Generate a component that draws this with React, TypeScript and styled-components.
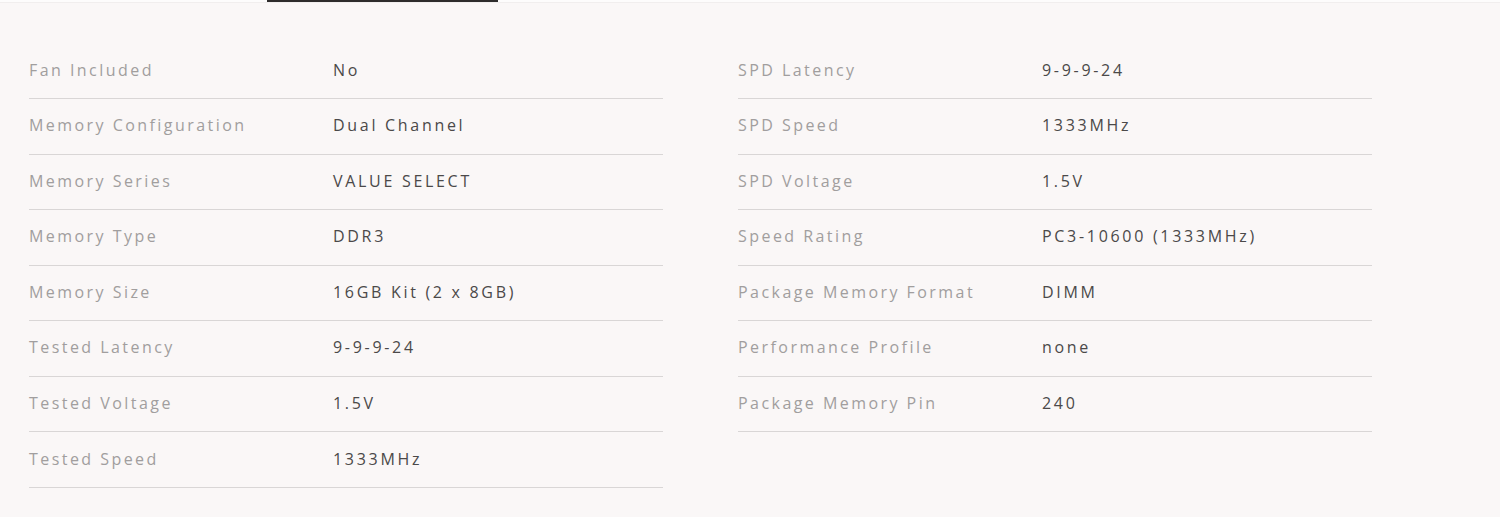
import React from "react";
import styled, { createGlobalStyle } from "styled-components";

const Global = createGlobalStyle`
  html, body { margin: 0; padding: 0; background: #faf7f7; }
  body { font-family: "Open Sans", Lato, sans-serif; }
`;

const Page = styled.div`
  width: 1500px;
  height: 517px;
  background: #faf7f7;
  overflow: hidden;
`;

const TabStrip = styled.div`
  height: 2px;
  background: #fdfcfc;
  border-bottom: 1px solid #f1eeee;
  padding-left: 267px;
`;

const TabIndicator = styled.div`
  width: 231px;
  height: 2px;
  background: #2e2c2c;
`;

const Specs = styled.div`
  display: grid;
  grid-template-columns: 634px 634px;
  column-gap: 75px;
  padding: 40.4px 0 0 29px;
  align-items: start;
`;

const Column = styled.div`
  display: flex;
  flex-direction: column;
`;

const Row = styled.div`
  display: grid;
  grid-template-columns: 304px 1fr;
  align-items: center;
  height: 55.57px;
  box-sizing: border-box;
  border-bottom: 1px solid #d9d6d6;
  padding-bottom: 2px;
`;

const Label = styled.span`
  font-size: 16px;
  letter-spacing: 2.45px;
  color: #a19e9e;
  font-weight: 400;
`;

const Value = styled.span`
  font-size: 16px;
  letter-spacing: 2.7px;
  color: #4b4949;
  font-weight: 500;
`;

const left: [string, string][] = [
  ["Fan Included", "No"],
  ["Memory Configuration", "Dual Channel"],
  ["Memory Series", "VALUE SELECT"],
  ["Memory Type", "DDR3"],
  ["Memory Size", "16GB Kit (2 x 8GB)"],
  ["Tested Latency", "9-9-9-24"],
  ["Tested Voltage", "1.5V"],
  ["Tested Speed", "1333MHz"],
];

const right: [string, string][] = [
  ["SPD Latency", "9-9-9-24"],
  ["SPD Speed", "1333MHz"],
  ["SPD Voltage", "1.5V"],
  ["Speed Rating", "PC3-10600 (1333MHz)"],
  ["Package Memory Format", "DIMM"],
  ["Performance Profile", "none"],
  ["Package Memory Pin", "240"],
];

const SpecColumn = ({ items }: { items: [string, string][] }) => (
  <Column>
    {items.map(([k, v]) => (
      <Row key={k}>
        <Label>{k}</Label>
        <Value>{v}</Value>
      </Row>
    ))}
  </Column>
);

export default function App() {
  return (
    <Page>
      <Global />
      <TabStrip>
        <TabIndicator />
      </TabStrip>
      <Specs>
        <SpecColumn items={left} />
        <SpecColumn items={right} />
      </Specs>
    </Page>
  );
}
